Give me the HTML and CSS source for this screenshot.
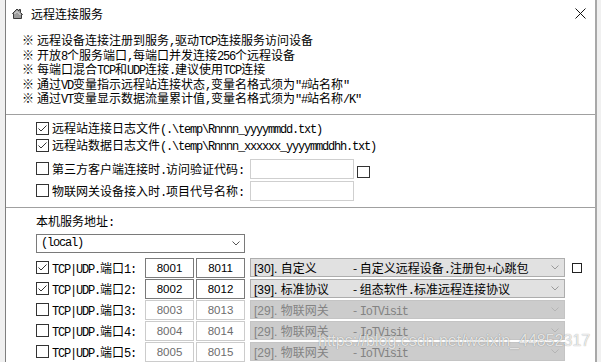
FILE: index.html
```html
<!DOCTYPE html>
<html lang="zh-CN">

<head>
    <meta charset="UTF-8">
    <meta name="viewport" content="width=device-width, initial-scale=1.0">
    <title>远程连接服务</title>
    <link rel="stylesheet" href="styles.css">
</head>

<body>
    <div class="screen">
        <div class="window">
            <div class="titlebar">
                <svg class="app-icon" width="11" height="11" viewBox="0 0 11 11">
                    <path d="M0.5 5.5 L5 1 L7 3 L7 1.5 L8.5 1.5 L8.5 4.5 L10.5 6.5 L9.5 6.5 L9.5 10.5 L1.5 10.5 L1.5 5.5 Z" fill="#9c9c9c" stroke="#3a3a3a" stroke-width="1" />
                    <path d="M2.5 6 L5 3.5 L8.5 7" fill="none" stroke="#e6e6e6" stroke-width="1" />
                </svg>
                <span class="title">远程连接服务</span>
                <svg class="close" width="11" height="11" viewBox="0 0 11 11">
                    <path d="M0.5 0.5 L10.5 10.5 M10.5 0.5 L0.5 10.5" stroke="#111" stroke-width="1" />
                </svg>
            </div>

            <div class="notes">
                <div class="note"><span class="mark">※</span>远程设备连接注册到服务<span class="mono">,</span>驱动<span class="mono">TCP</span>连接服务访问设备</div>
                <div class="note"><span class="mark">※</span>开放<span class="mono">8</span>个服务端口<span class="mono">,</span>每端口并发连接<span class="mono">256</span>个远程设备</div>
                <div class="note"><span class="mark">※</span>每端口混合<span class="mono">TCP</span>和<span class="mono">UDP</span>连接<span class="mono">.</span>建议使用<span class="mono">TCP</span>连接</div>
                <div class="note"><span class="mark">※</span>通过<span class="mono">VD</span>变量指示远程站连接状态<span class="mono">,</span>变量名格式须为<span class="mono">"#</span>站名称<span class="mono">"</span></div>
                <div class="note"><span class="mark">※</span>通过<span class="mono">VT</span>变量显示数据流量累计值<span class="mono">,</span>变量名格式须为<span class="mono">"#</span>站名称<span class="mono">/K"</span></div>
            </div>

            <div class="sep"></div>

            <div class="options">
                <div class="check-row">
                    <span class="box checked"><svg width="11" height="11" viewBox="0 0 11 11"><path d="M1.5 5.5 L4 8 L9.5 2.5" fill="none" stroke="#333" stroke-width="1" /></svg></span>
                    <span>远程站连接日志文件<span class="mono">(.\temp\Rnnnn_yyyymmdd.txt)</span></span>
                </div>
                <div class="check-row">
                    <span class="box checked"><svg width="11" height="11" viewBox="0 0 11 11"><path d="M1.5 5.5 L4 8 L9.5 2.5" fill="none" stroke="#333" stroke-width="1" /></svg></span>
                    <span>远程站数据日志文件<span class="mono">(.\temp\Rnnnn_xxxxxx_yyyymmddhh.txt)</span></span>
                </div>
                <div class="field-row first">
                    <span class="box"></span>
                    <span class="field-label">第三方客户端连接时<span class="mono">.</span>访问验证代码<span class="mono">:</span></span>
                    <span class="text-field"></span>
                    <span class="box small-box"></span>
                </div>
                <div class="field-row">
                    <span class="box"></span>
                    <span class="field-label">物联网关设备接入时<span class="mono">.</span>项目代号名称<span class="mono">:</span></span>
                    <span class="text-field"></span>
                </div>
            </div>

            <div class="sep"></div>

            <div class="ports">
                <div class="addr-label">本机服务地址<span class="mono">:</span></div>
                <div class="addr-select">
                    <span class="mono">(local)</span>
                    <svg class="chevron" width="8" height="5" viewBox="0 0 8 5"><path d="M0.5 0.5 L4 4 L7.5 0.5" fill="none" stroke="#555" stroke-width="1" /></svg>
                </div>

                <div class="port-list">
                    <div class="port-row">
                        <span class="box checked"><svg width="11" height="11" viewBox="0 0 11 11"><path d="M1.5 5.5 L4 8 L9.5 2.5" fill="none" stroke="#333" stroke-width="1" /></svg></span>
                        <span class="port-label"><span class="mono">TCP|UDP.</span>端口<span class="mono">1:</span></span>
                        <span class="port-input">8001</span>
                        <span class="port-input second">8011</span>
                        <div class="proto">
                            <span class="proto-code">[30]. 自定义</span>
                            <span>- 自定义远程设备<span class="mono">.</span>注册包+心跳包</span>
                            <svg class="chevron" width="8" height="5" viewBox="0 0 8 5"><path d="M0.5 0.5 L4 4 L7.5 0.5" fill="none" stroke="#9a9a9a" stroke-width="1" /></svg>
                        </div>
                        <span class="tiny-box"></span>
                    </div>
                    <div class="port-row">
                        <span class="box checked"><svg width="11" height="11" viewBox="0 0 11 11"><path d="M1.5 5.5 L4 8 L9.5 2.5" fill="none" stroke="#333" stroke-width="1" /></svg></span>
                        <span class="port-label"><span class="mono">TCP|UDP.</span>端口<span class="mono">2:</span></span>
                        <span class="port-input">8002</span>
                        <span class="port-input second">8012</span>
                        <div class="proto">
                            <span class="proto-code">[39]. 标准协议</span>
                            <span>- 组态软件<span class="mono">.</span>标准远程连接协议</span>
                            <svg class="chevron" width="8" height="5" viewBox="0 0 8 5"><path d="M0.5 0.5 L4 4 L7.5 0.5" fill="none" stroke="#9a9a9a" stroke-width="1" /></svg>
                        </div>
                    </div>
                    <div class="port-row off">
                        <span class="box"></span>
                        <span class="port-label"><span class="mono">TCP|UDP.</span>端口<span class="mono">3:</span></span>
                        <span class="port-input">8003</span>
                        <span class="port-input second">8013</span>
                        <div class="proto">
                            <span class="proto-code">[29]. 物联网关</span>
                            <span>- <span class="mono">IoTVisit</span></span>
                            <svg class="chevron" width="8" height="5" viewBox="0 0 8 5"><path d="M0.5 0.5 L4 4 L7.5 0.5" fill="none" stroke="#b4b4b4" stroke-width="1" /></svg>
                        </div>
                    </div>
                    <div class="port-row off">
                        <span class="box"></span>
                        <span class="port-label"><span class="mono">TCP|UDP.</span>端口<span class="mono">4:</span></span>
                        <span class="port-input">8004</span>
                        <span class="port-input second">8014</span>
                        <div class="proto">
                            <span class="proto-code">[29]. 物联网关</span>
                            <span>- <span class="mono">IoTVisit</span></span>
                            <svg class="chevron" width="8" height="5" viewBox="0 0 8 5"><path d="M0.5 0.5 L4 4 L7.5 0.5" fill="none" stroke="#b4b4b4" stroke-width="1" /></svg>
                        </div>
                    </div>
                    <div class="port-row off">
                        <span class="box"></span>
                        <span class="port-label"><span class="mono">TCP|UDP.</span>端口<span class="mono">5:</span></span>
                        <span class="port-input">8005</span>
                        <span class="port-input second">8015</span>
                        <div class="proto">
                            <span class="proto-code">[29]. 物联网关</span>
                            <span>- <span class="mono">IoTVisit</span></span>
                            <svg class="chevron" width="8" height="5" viewBox="0 0 8 5"><path d="M0.5 0.5 L4 4 L7.5 0.5" fill="none" stroke="#b4b4b4" stroke-width="1" /></svg>
                        </div>
                    </div>
                </div>
            </div>

            <div class="watermark">https://blog.csdn.net/weixin_44852317</div>
        </div>
    </div>
</body>

</html>
```

FILE: styles.css
```css
body {
    margin: 0;
    font-family: "Noto Sans CJK SC", sans-serif;
    font-size: 12px;
    color: #000;
}

.screen {
    width: 601px;
    height: 362px;
    box-sizing: border-box;
    padding: 0 4px 0 5px;
    background-color: #f0f0f0;
    display: flex;
    overflow: hidden;
}

.window {
    flex: 1;
    position: relative;
    background-color: #fff;
    border-left: 1px solid #7f7f7f;
    border-right: 2px solid #a8a8a8;
}

/* half-width text, same 6px cell as the dialog font */
.mono {
    font-family: "Liberation Mono", monospace;
    font-size: 12px;
    letter-spacing: -1.2px;
}

/* title bar */
.titlebar {
    height: 27px;
    display: flex;
    align-items: center;
    padding: 0 9px 0 6px;
}

.title {
    margin-left: 8px;
    line-height: 14px;
}

.close {
    margin-left: auto;
}

/* notes */
.notes {
    padding: 6px 0 8px 16px;
}

.note {
    height: 14.5px;
    line-height: 14.5px;
    white-space: nowrap;
}

.mark {
    display: inline-block;
    width: 15px;
}

.sep {
    height: 1px;
    background-color: #a0a0a0;
}

/* option checkboxes */
.options {
    padding: 5px 0 6px 30px;
}

.box {
    width: 13px;
    height: 13px;
    box-sizing: border-box;
    border: 1px solid #333;
    background-color: #fff;
    margin-right: 3px;
    flex-shrink: 0;
    display: flex;
    align-items: center;
    justify-content: center;
}

.check-row {
    height: 17px;
    display: flex;
    align-items: center;
    white-space: nowrap;
}

.field-row {
    height: 20px;
    margin-top: 2px;
    display: flex;
    align-items: center;
}

.field-row.first {
    margin-top: 5px;
}

.field-label {
    width: 198px;
    white-space: nowrap;
}

.text-field {
    width: 104px;
    height: 20px;
    box-sizing: border-box;
    border: 1px solid #cfcfcf;
}

.small-box {
    height: 12px;
    margin: 0 0 1px 3px;
    align-self: flex-end;
}

/* port list */
.ports {
    padding: 6px 0 0 30px;
}

.addr-label {
    line-height: 14px;
}

.addr-select {
    width: 209px;
    height: 19px;
    box-sizing: border-box;
    margin-top: 4px;
    border: 1px solid #7a7a7a;
    padding: 0 4px;
    display: flex;
    align-items: center;
}

.chevron {
    margin-left: auto;
}

.port-list {
    margin-top: 5px;
    display: flex;
    flex-direction: column;
    gap: 1px;
}

.port-row {
    height: 20px;
    display: flex;
    align-items: center;
    white-space: nowrap;
}

.port-label {
    width: 93px;
}

.port-input {
    width: 49px;
    height: 20px;
    box-sizing: border-box;
    border: 1px solid #7a7a7a;
    font-family: "Liberation Sans", sans-serif;
    font-size: 11.5px;
    line-height: 18px;
    text-align: center;
}

.port-input.second {
    margin-left: 2px;
}

.proto {
    width: 315px;
    height: 19px;
    box-sizing: border-box;
    margin-left: 5px;
    padding: 0 5px 0 3px;
    background-color: #e1e1e1;
    border: 1px solid #adadad;
    display: flex;
    align-items: center;
}

.proto-code {
    width: 99px;
    font-family: "Liberation Sans", "Noto Sans CJK SC", sans-serif;
}

.tiny-box {
    width: 10px;
    height: 10px;
    box-sizing: border-box;
    margin-left: 7px;
    border: 1px solid #222;
}

.port-row.off .port-input {
    border-color: #cccccc;
    color: #6d6d6d;
}

.port-row.off .proto {
    background-color: #cccccc;
    border-color: #c4c4c4;
    color: #838383;
}

.watermark {
    position: absolute;
    left: 312px;
    top: 332px;
    font-family: "Liberation Sans", sans-serif;
    font-size: 16px;
    line-height: 18px;
    color: rgba(255, 255, 255, 0.8);
    text-shadow: 0 0 1px rgba(0, 0, 0, 0.45);
    white-space: nowrap;
}
```
